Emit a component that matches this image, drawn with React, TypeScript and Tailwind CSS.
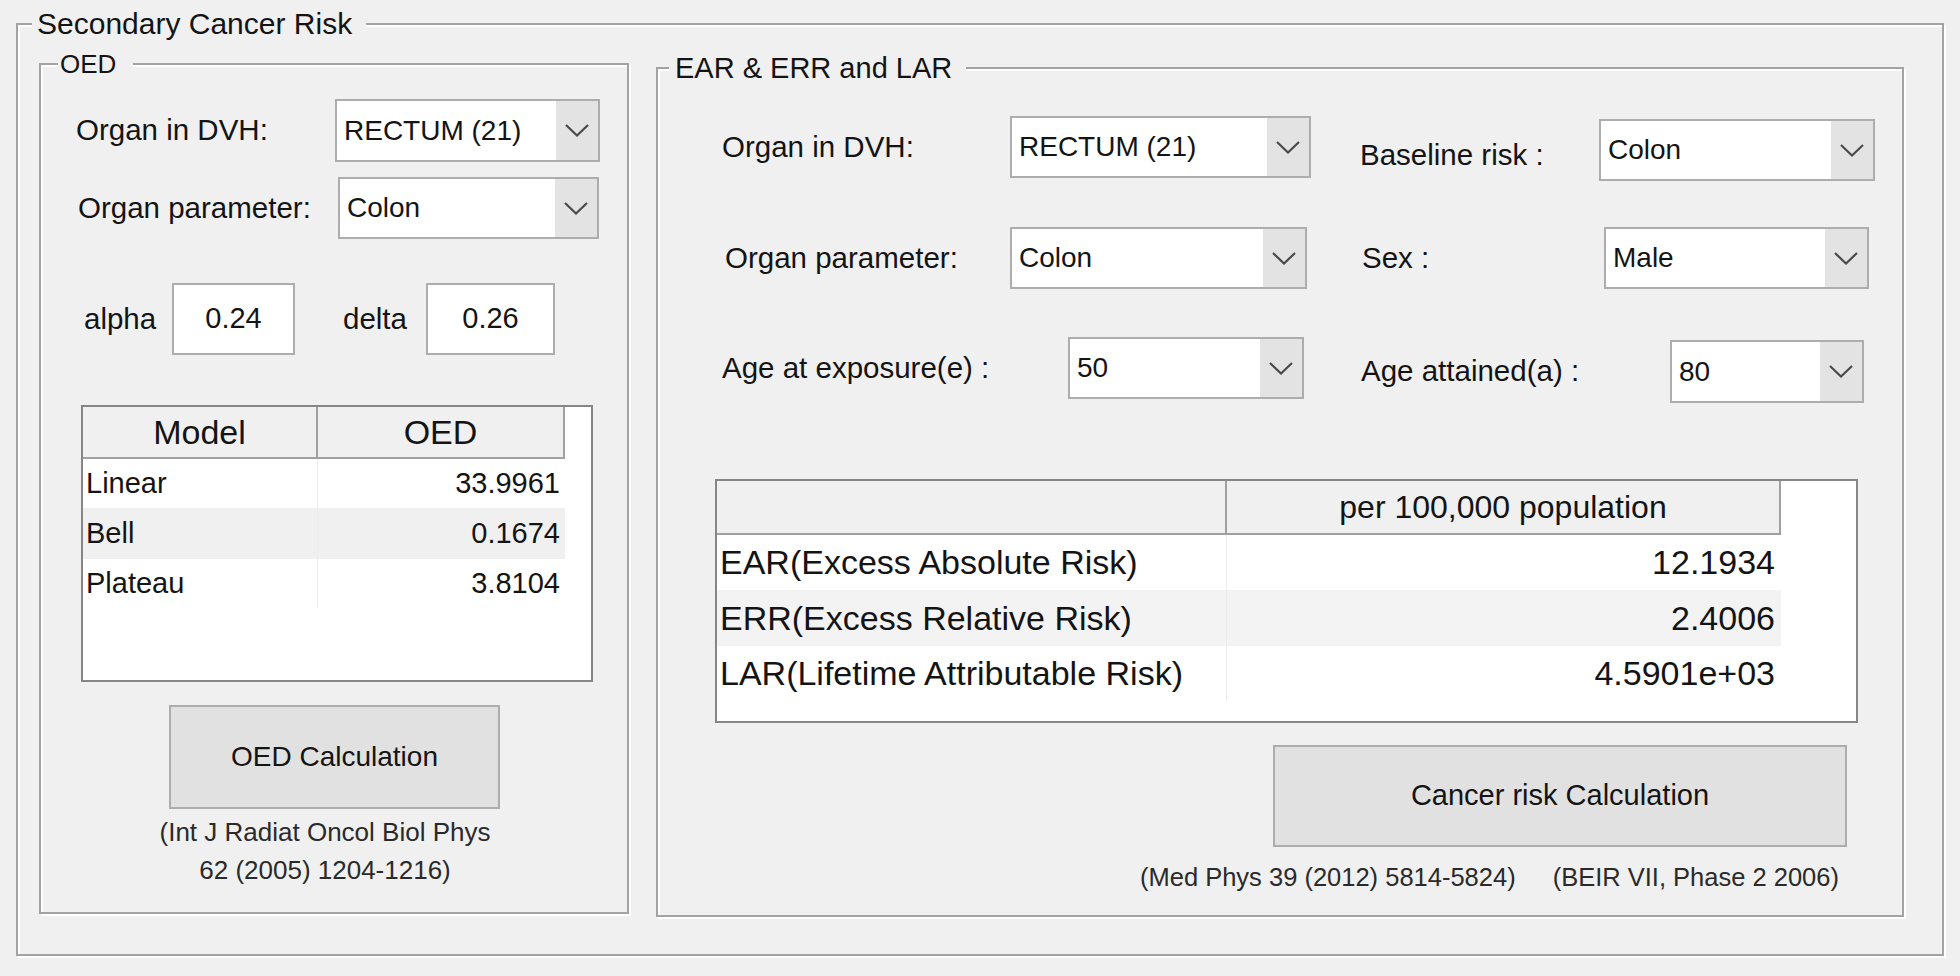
import clsx from "clsx";

type Row = { label: string; value: string };

const oedRows: Row[] = [
    { label: "Linear", value: "33.9961" },
    { label: "Bell", value: "0.1674" },
    { label: "Plateau", value: "3.8104" },
];

const riskRows: Row[] = [
    { label: "EAR(Excess Absolute Risk)", value: "12.1934" },
    { label: "ERR(Excess Relative Risk)", value: "2.4006" },
    { label: "LAR(Lifetime Attributable Risk)", value: "4.5901e+03" },
];

function GroupBox({
    title,
    legendClass,
    className,
    children,
}: {
    title: string;
    legendClass: string;
    className: string;
    children: React.ReactNode;
}) {
    return (
        <fieldset
            className={clsx(
                "min-w-0 border-2 border-[#a3a3a3] shadow-[2px_2px_0_#ffffff,inset_2px_2px_0_#ffffff]",
                className
            )}
        >
            <legend className={clsx("bg-[#f0f0f0]", legendClass)}>{title}</legend>
            {children}
        </fieldset>
    );
}

function Dropdown({ value, className }: { value: string; className: string }) {
    return (
        <div className={clsx("flex border-2 border-[#adadad] bg-white", className)}>
            <div className="flex flex-1 items-center pl-[7px] text-[28px]">{value}</div>
            <div className="flex w-[42px] items-center justify-center bg-[#e3e3e3]">
                <svg width="24" height="13" viewBox="0 0 24 13">
                    <polyline
                        points="1,1 12,11.5 23,1"
                        fill="none"
                        stroke="#4a4a4a"
                        strokeWidth="2.2"
                    />
                </svg>
            </div>
        </div>
    );
}

function TextBox({ value, className }: { value: string; className: string }) {
    return (
        <div
            className={clsx(
                "flex items-center justify-center border-2 border-[#adadad] bg-white text-[29px]",
                className
            )}
        >
            {value}
        </div>
    );
}

function PushButton({ label, className }: { label: string; className: string }) {
    return (
        <div
            className={clsx(
                "flex items-center justify-center border-2 border-[#adadad] bg-[#e1e1e1]",
                className
            )}
        >
            {label}
        </div>
    );
}

export default function App() {
    return (
        <div className="h-[976px] w-[1960px] overflow-hidden bg-[#f0f0f0] pl-[16px] pt-[7px] font-['Liberation_Sans',Arial,sans-serif] text-[29.5px] text-[#141414]">
            {/* Outer panel */}
            <GroupBox
                title="Secondary Cancer Risk"
                legendClass="ml-[14px] pl-[5px] pr-[14px] text-[30px] leading-[34px]"
                className="h-[949px] w-[1928px]"
            >
                <div className="flex items-start">
                    {/* OED */}
                    <GroupBox
                        title="OED"
                        legendClass="ml-[17px] pl-[2px] pr-[17px] text-[26px] leading-[30px]"
                        className="ml-[21px] mt-[8px] h-[865px] w-[590px]"
                    >
                        <div className="flex flex-col">
                            <div className="ml-[35px] mt-[20px] flex items-center">
                                <span className="w-[259px]">Organ in DVH:</span>
                                <Dropdown value="RECTUM (21)" className="h-[63px] w-[265px]" />
                            </div>
                            <div className="ml-[37px] mt-[15px] flex items-center">
                                <span className="w-[260px]">Organ parameter:</span>
                                <Dropdown value="Colon" className="h-[62px] w-[261px]" />
                            </div>
                            <div className="ml-[43px] mt-[44px] flex items-center">
                                <span className="w-[88px]">alpha</span>
                                <TextBox value="0.24" className="h-[72px] w-[123px]" />
                                <span className="ml-[48px] w-[83px]">delta</span>
                                <TextBox value="0.26" className="h-[72px] w-[129px]" />
                            </div>

                            {/* Model table */}
                            <div className="ml-[40px] mt-[50px] h-[277px] w-[512px] border-2 border-[#868686] bg-white">
                                <div className="flex h-[52px] w-[482px] border-b-2 border-[#a0a0a0] bg-[#f0f0f0] text-[34px]">
                                    <div className="flex w-[235px] items-center justify-center border-r-2 border-[#a0a0a0]">
                                        Model
                                    </div>
                                    <div className="flex w-[247px] items-center justify-center border-r-2 border-[#a0a0a0]">
                                        OED
                                    </div>
                                </div>
                                {oedRows.map((row, i) => (
                                    <div
                                        key={row.label}
                                        className={clsx(
                                            "flex w-[482px] text-[29px]",
                                            i === 1 ? "h-[51px] bg-[#f0f0f0]" : "h-[49px] bg-white"
                                        )}
                                    >
                                        <div className="flex w-[235px] items-center border-r border-[#ececec] pl-[3px]">
                                            {row.label}
                                        </div>
                                        <div className="flex w-[247px] items-center justify-end pr-[5px]">
                                            {row.value}
                                        </div>
                                    </div>
                                ))}
                            </div>

                            <PushButton
                                label="OED Calculation"
                                className="ml-[128px] mt-[23px] h-[104px] w-[331px] text-[28px]"
                            />
                            <div className="ml-[34px] mt-[4px] w-[500px] text-center text-[26px] leading-[38px] text-[#2a2a2a]">
                                <div>(Int J Radiat Oncol Biol Phys</div>
                                <div>62 (2005) 1204-1216)</div>
                            </div>
                        </div>
                    </GroupBox>

                    {/* EAR & ERR and LAR */}
                    <GroupBox
                        title="EAR & ERR and LAR"
                        legendClass="ml-[11px] pl-[6px] pr-[14px] text-[29px] leading-[32px]"
                        className="ml-[27px] mt-[11px] h-[865px] w-[1248px]"
                    >
                        <div className="flex flex-col">
                            <div className="mt-[32px] flex items-start">
                                <div className="ml-[64px] flex items-center">
                                    <span className="w-[288px]">Organ in DVH:</span>
                                    <Dropdown value="RECTUM (21)" className="h-[62px] w-[301px]" />
                                </div>
                                <div className="ml-[49px] mt-[3px] flex items-center">
                                    <span className="mt-[10px] w-[239px]">Baseline risk :</span>
                                    <Dropdown value="Colon" className="h-[62px] w-[276px]" />
                                </div>
                            </div>
                            <div className="mt-[46px] flex items-start">
                                <div className="ml-[67px] flex items-center">
                                    <span className="w-[285px]">Organ parameter:</span>
                                    <Dropdown value="Colon" className="h-[62px] w-[297px]" />
                                </div>
                                <div className="ml-[55px] flex items-center">
                                    <span className="w-[242px]">Sex :</span>
                                    <Dropdown value="Male" className="h-[62px] w-[265px]" />
                                </div>
                            </div>
                            <div className="mt-[48px] flex items-start">
                                <div className="ml-[64px] flex items-center">
                                    <span className="w-[346px]">Age at exposure(e) :</span>
                                    <Dropdown value="50" className="h-[62px] w-[236px]" />
                                </div>
                                <div className="ml-[57px] mt-[3px] flex items-center">
                                    <span className="w-[309px]">Age attained(a) :</span>
                                    <Dropdown value="80" className="h-[63px] w-[194px]" />
                                </div>
                            </div>

                            {/* Risk table */}
                            <div className="ml-[57px] mt-[76px] h-[244px] w-[1143px] border-2 border-[#868686] bg-white">
                                <div className="flex h-[54px] w-[1064px] border-b-2 border-[#a0a0a0] bg-[#f0f0f0]">
                                    <div className="w-[510px] border-r-2 border-[#a0a0a0]" />
                                    <div className="flex w-[554px] items-center justify-center border-r-2 border-[#a0a0a0] text-[32px]">
                                        per 100,000 population
                                    </div>
                                </div>
                                {riskRows.map((row, i) => (
                                    <div
                                        key={row.label}
                                        className={clsx(
                                            "flex w-[1064px] text-[34px]",
                                            i === 1 ? "h-[56px] bg-[#f3f3f3]" : "h-[55px] bg-white"
                                        )}
                                    >
                                        <div className="flex w-[510px] items-center border-r border-[#ececec] pl-[3px]">
                                            {row.label}
                                        </div>
                                        <div className="flex w-[554px] items-center justify-end pr-[6px]">
                                            {row.value}
                                        </div>
                                    </div>
                                ))}
                            </div>

                            <PushButton
                                label="Cancer risk Calculation"
                                className="ml-[615px] mt-[22px] h-[102px] w-[574px] text-[29px]"
                            />
                            <div className="ml-[482px] mt-[14px] flex text-[25.5px] leading-[32px] text-[#2a2a2a]">
                                <span>(Med Phys 39 (2012) 5814-5824)</span>
                                <span className="ml-[37px]">(BEIR VII, Phase 2 2006)</span>
                            </div>
                        </div>
                    </GroupBox>
                </div>
            </GroupBox>
        </div>
    );
}
